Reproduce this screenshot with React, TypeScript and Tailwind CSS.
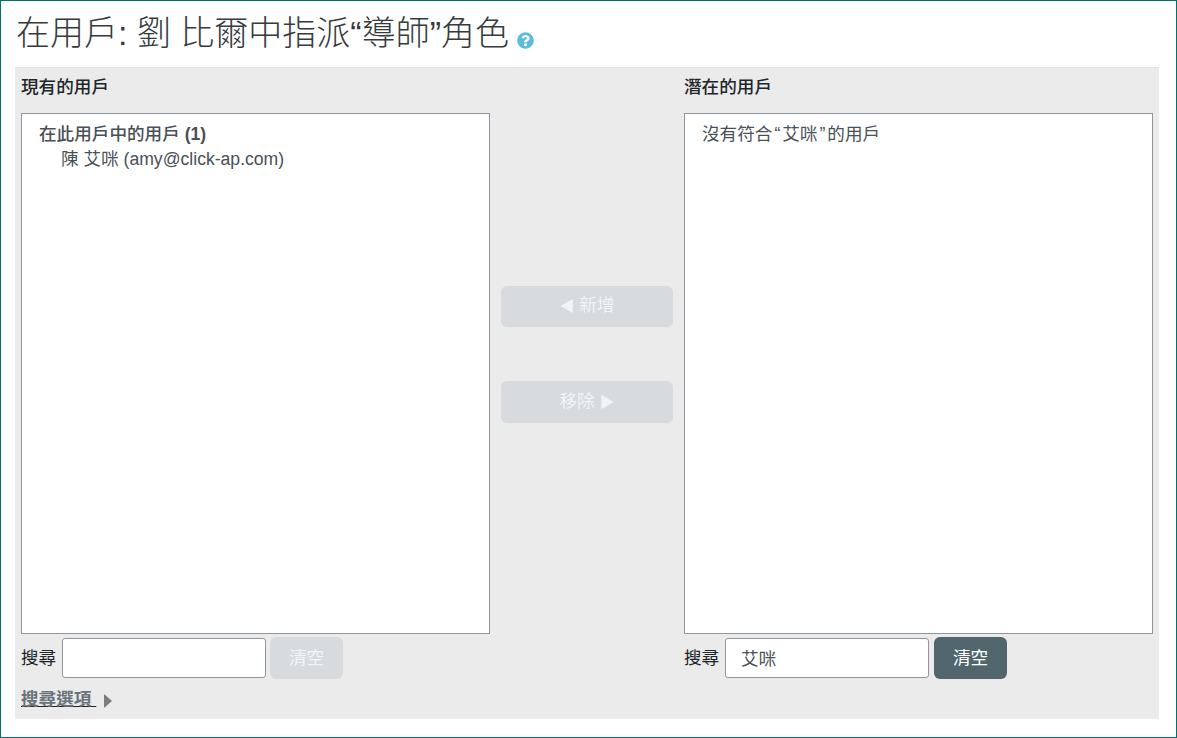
import { FaQuestionCircle } from "react-icons/fa";

const font = "font-['Liberation_Sans','Noto_Sans_CJK_TC',sans-serif]";

function SearchRow({ value, active }: { value: string; active: boolean }) {
  return (
    <div className="mt-[3px] flex h-[42px] items-center">
      <label className="w-[41px] shrink-0 text-[17.6px] text-[#212529]">搜尋</label>
      <input
        readOnly
        value={value}
        className="h-10 w-[204px] rounded-[3px] border border-[#8f959e] bg-white px-[15px] pb-px text-[17.6px] text-[#495057] outline-none"
      />
      <button
        className={
          active
            ? "ml-[5px] h-[42px] w-[73px] rounded-md bg-[#51666c] text-[17.6px] text-white"
            : "ml-1 h-[42px] w-[73px] rounded-md bg-[#d7dadf] text-[17.6px] text-[#f3f4f5]"
        }
      >
        清空
      </button>
    </div>
  );
}

function UserBox({ children }: { children: React.ReactNode }) {
  return (
    <div className="h-[521px] w-[469px] border border-[#8f959e] bg-white px-[17px] pt-[8px] text-[17.6px] leading-[25px] text-[#495057]">
      {children}
    </div>
  );
}

export default function App() {
  return (
    <div className={`${font} h-[738px] w-[1177px] border border-[#00716b] bg-white pl-[14px]`}>
      <h2 className="flex h-[66px] items-center pb-[2px] pl-px text-[34px] font-light leading-none text-[#373a3c]">
        在用戶: 劉 比爾中指派“導師”角色
        <FaQuestionCircle className="ml-[8px] mt-[14px] h-[17px] w-[17px] text-[#5bbcdd]" />
      </h2>
      <div className="h-[652px] w-[1144px] border-t border-[#e2e3e4] bg-[#ebebeb] px-[6px]">
        <div className="flex">
          <div className="w-[469px]">
            <h3 className="flex h-[45px] items-center pb-[7px] text-[17.6px] font-medium text-[#212529]">現有的用戶</h3>
            <UserBox>
              <div className="font-medium">
                在此用戶中的用戶 <b>(1)</b>
              </div>
              <div className="pl-[22px]">陳 艾咪 (amy@click-ap.com)</div>
            </UserBox>
            <SearchRow value="" active={false} />
          </div>
          <div className="flex w-[194px] flex-col items-center pt-[218px]">
            <button className="h-[41px] w-[172px] rounded-md bg-[#d7dadf] pb-[2px] text-[17.6px] text-[#f3f4f5]">
              <span className="text-[15px]">◀</span> 新增
            </button>
            <button className="mt-[54px] h-[42px] w-[172px] rounded-md bg-[#d7dadf] pb-[2px] text-[17.6px] text-[#f3f4f5]">
              移除 <span className="text-[15px]">▶</span>
            </button>
          </div>
          <div className="w-[469px]">
            <h3 className="flex h-[45px] items-center pb-[7px] text-[17.6px] font-medium text-[#212529]">潛在的用戶</h3>
            <UserBox>
              <div>
                沒有符合<span className="px-[2px]">“</span>艾咪<span className="px-[2px]">”</span>的用戶
              </div>
            </UserBox>
            <SearchRow value="艾咪" active />
          </div>
        </div>
        <div className="mt-[7px] flex items-center">
          <a className="text-[17.6px] font-bold text-[#6a737b] underline decoration-[#212529]">搜尋選項&nbsp;</a>
          <span className="ml-[8px] mt-[3px] h-0 w-0 border-y-[7px] border-l-[8px] border-y-transparent border-l-[#7c7c7c]" />
        </div>
      </div>
    </div>
  );
}
